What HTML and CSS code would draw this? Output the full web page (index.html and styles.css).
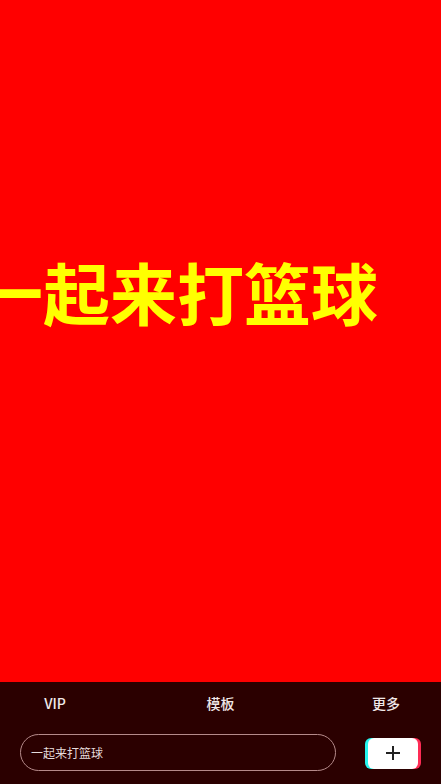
FILE: index.html
```html
<!DOCTYPE html>
<html lang="zh-CN">
<head>
  <meta charset="UTF-8">
  <meta name="viewport" content="width=device-width, initial-scale=1.0">
  <title>手持弹幕</title>
  <link rel="stylesheet" href="styles.css">
</head>
<body>
  <div class="stage">
    <div class="marquee">一起来打篮球</div>
  </div>

  <div class="panel">
    <div class="tabs">
      <span class="tab">VIP</span>
      <span class="tab">模板</span>
      <span class="tab">更多</span>
    </div>
    <div class="input-row">
      <div class="text-input">一起来打篮球</div>
      <button class="add-btn" aria-label="添加">
        <svg width="16" height="16" viewBox="0 0 16 16">
          <path d="M8 1v14M1 8h14" stroke="#222" stroke-width="2" fill="none"/>
        </svg>
      </button>
    </div>
  </div>
</body>
</html>
```

FILE: styles.css
```css
body {
  margin: 0;
  width: 441px;
  height: 784px;
  overflow: hidden;
  font-family: "Noto Sans CJK SC", "Noto Sans", sans-serif;
  background: #2b0000;
}

.stage {
  height: 682px;
  background: #ff0000;
  overflow: hidden;
  box-sizing: border-box;
  padding-top: 255px;
}

/* 滚动中的弹幕文字，左侧被裁切 */
.marquee {
  margin-left: -24px;
  white-space: nowrap;
  font-size: 67px;
  line-height: 72px;
  font-weight: 700;
  color: #ffff00;
}

.panel {
  height: 102px;
  background: #2b0000;
}

.tabs {
  height: 42px;
  display: flex;
  justify-content: space-between;
  align-items: center;
}

.tab {
  width: 110px;
  text-align: center;
  font-size: 14px;
  font-weight: 500;
  color: #f0e8e8;
}

.input-row {
  display: flex;
  justify-content: space-between;
  align-items: center;
  padding: 10px 23px 0 20px;
}

.text-input {
  width: 316px;
  height: 37px;
  box-sizing: border-box;
  border: 1px solid #b58a8a;
  border-radius: 19px;
  padding-left: 10px;
  display: flex;
  align-items: center;
  font-size: 12px;
  color: #e6dcdc;
}

.add-btn {
  width: 50px;
  height: 31px;
  border: none;
  border-radius: 6px;
  background: #ffffff;
  box-shadow: -3px 0 0 #25f4ee, 3px 0 0 #fe2c55;
  display: flex;
  align-items: center;
  justify-content: center;
  padding: 0;
  margin-top: 1px;
}
```
